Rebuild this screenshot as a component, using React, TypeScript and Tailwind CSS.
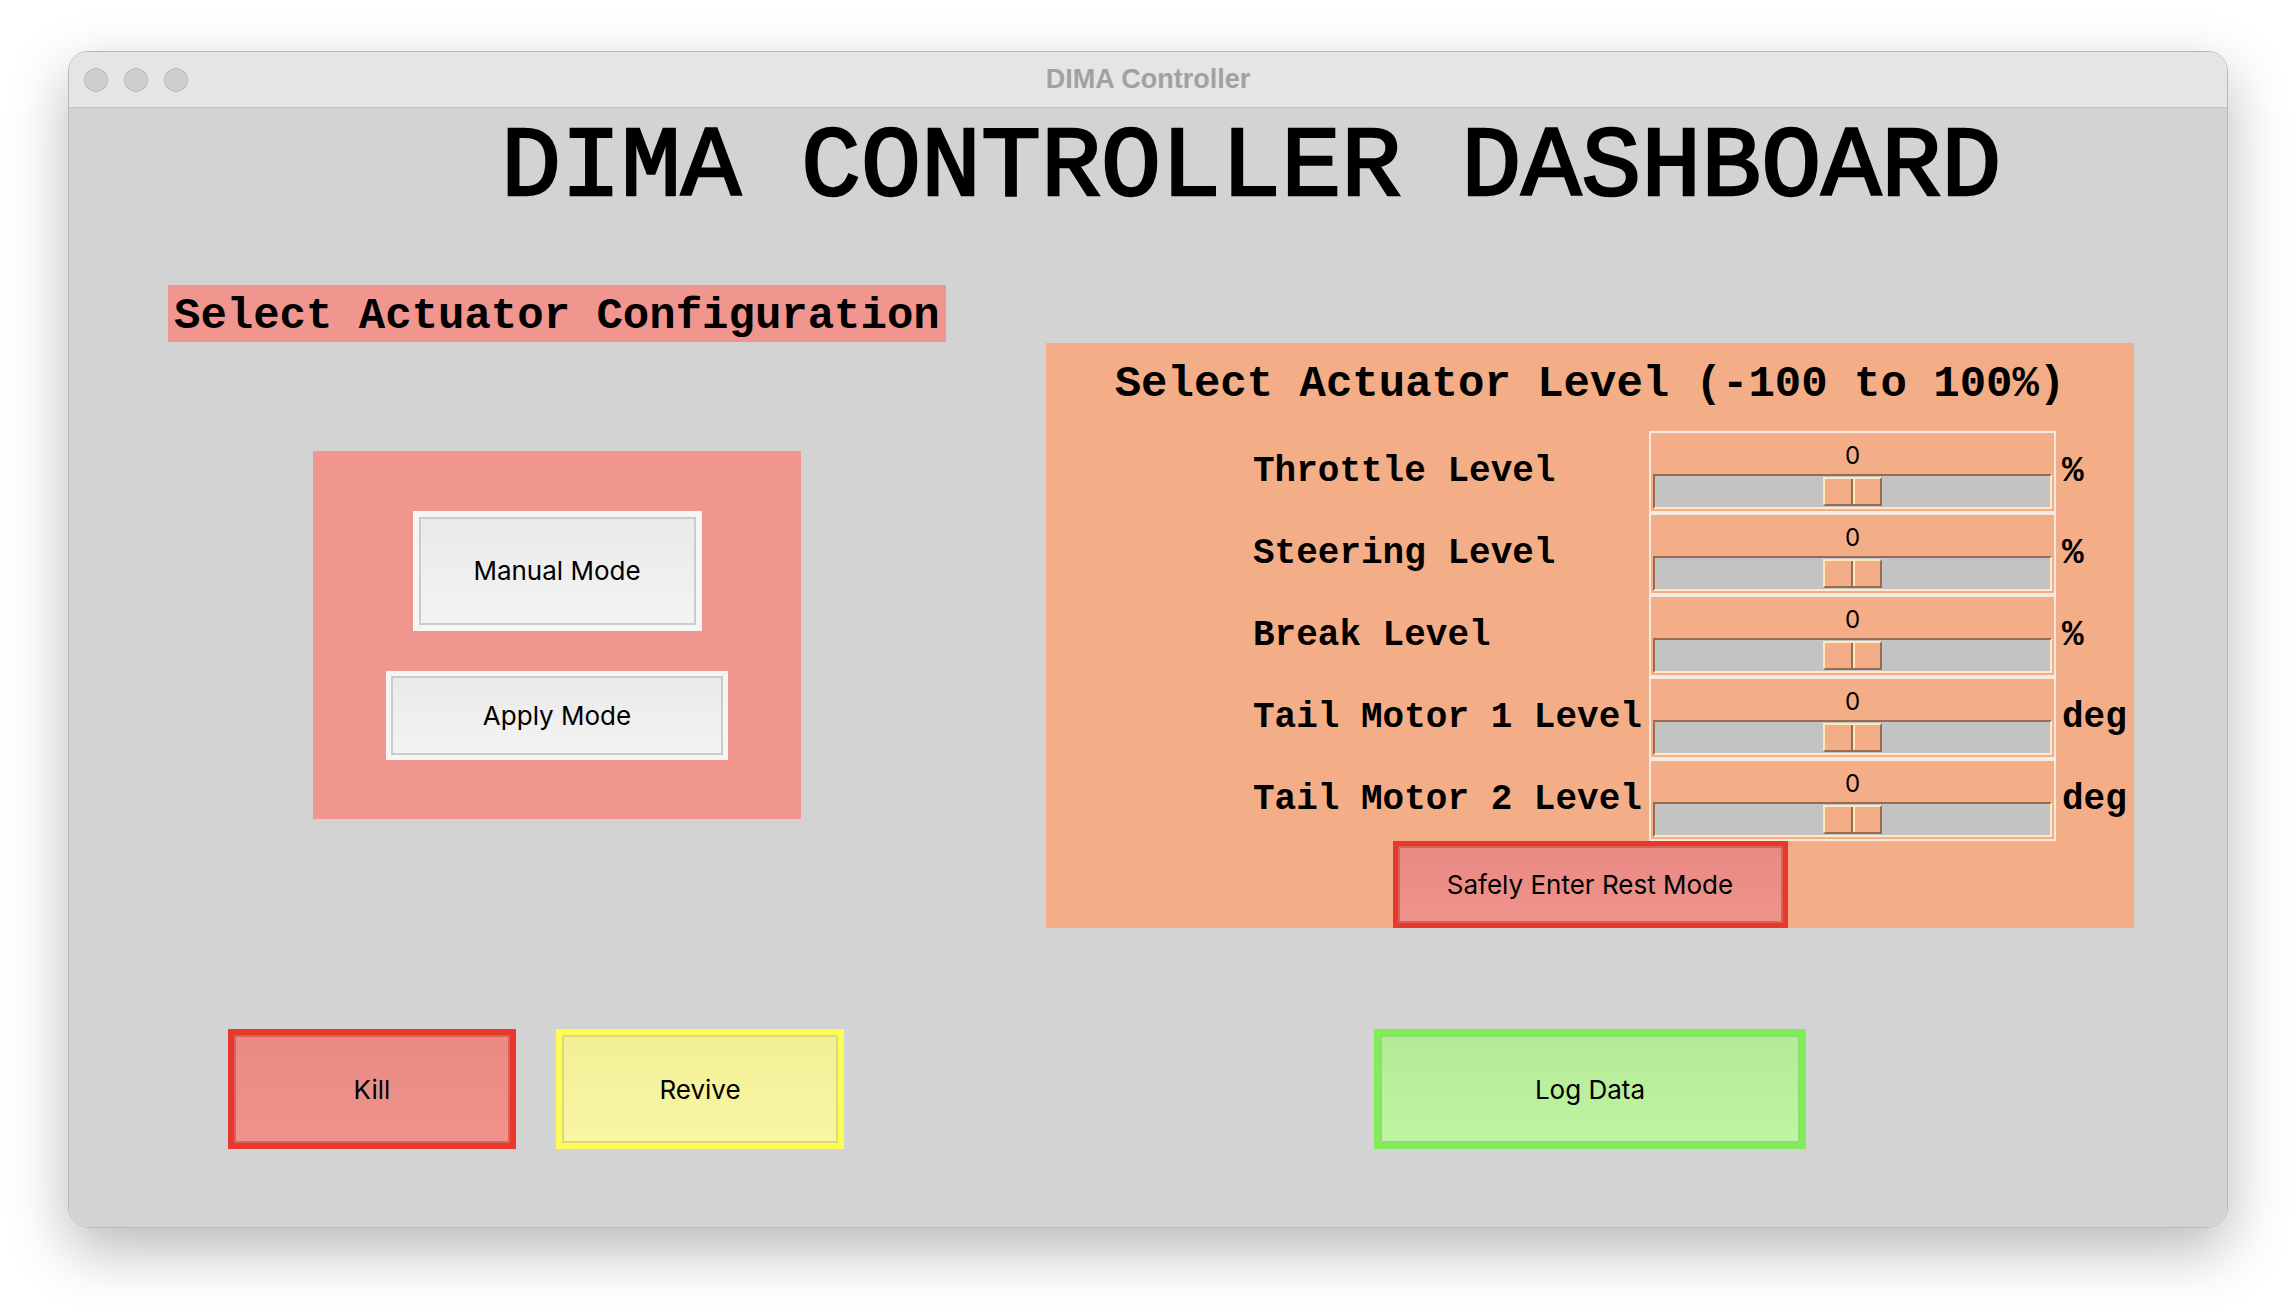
import React from "react";

const mono = "font-['Liberation_Mono','Courier_New',monospace]";
const sans = "font-['Inter','Roboto',sans-serif]";

const rows = [
  { label: "Throttle Level", unit: "%" },
  { label: "Steering Level", unit: "%" },
  { label: "Break Level", unit: "%" },
  { label: "Tail Motor 1 Level", unit: "deg" },
  { label: "Tail Motor 2 Level", unit: "deg" },
];

function LevelRow({ label, unit }: { label: string; unit: string }) {
  return (
    <div className="flex items-center h-[82px]">
      <div className={`${mono} w-[396px] text-[36px] font-bold leading-none text-black`}>{label}</div>
      <div className="w-[407px] h-[82px] border-2 border-[#f5e9e0] flex flex-col pb-[2px]">
        <div className={`${sans} h-[41px] flex items-center justify-center pt-[4px] text-[24px] leading-none text-black`}>
          0
        </div>
        <div className="mx-[2px] h-[35px] border-2 border-t-[#9b6b4f] border-l-[#9b6b4f] border-b-[#fdebc9] border-r-[#fdebc9] bg-[#c3c3c3] flex items-center justify-center">
          <div className="w-[59px] h-[29px] flex border-[2.5px] border-t-[#fde9c0] border-l-[#fde9c0] border-b-[#9b6b4f] border-r-[#9b6b4f] bg-[#f3ae88]">
            <div className="flex-1" />
            <div className="w-[2px] bg-[#9b6b4f]" />
            <div className="w-[2px] bg-[#fde9c0]" />
            <div className="flex-1" />
          </div>
        </div>
      </div>
      <div className={`${mono} pl-[6px] text-[36px] font-bold leading-none text-black`}>{unit}</div>
    </div>
  );
}

export default function App() {
  return (
    <div className="w-[2296px] h-[1312px] bg-white pt-[51px] pl-[68px]">
      <div className="w-[2160px] h-[1177px] rounded-[20px] overflow-hidden border border-[#b9b9b9] shadow-[0_22px_60px_rgba(0,0,0,0.28)] flex flex-col">
        {/* title bar */}
        <div className="h-[56px] shrink-0 bg-[#e5e5e5] border-b border-[#c3c3c3] grid grid-cols-[1fr_auto_1fr] items-center">
          <div className="flex items-center gap-[16px] pl-[15px]">
            <div className="w-[24px] h-[24px] rounded-full bg-[#cfcfcf] border border-[#b4b4b4]" />
            <div className="w-[24px] h-[24px] rounded-full bg-[#cfcfcf] border border-[#b4b4b4]" />
            <div className="w-[24px] h-[24px] rounded-full bg-[#cfcfcf] border border-[#b4b4b4]" />
          </div>
          <div className="font-['Liberation_Sans',Arial,sans-serif] text-[27px] font-bold text-[#a1a1a1] leading-none">
            DIMA Controller
          </div>
          <div />
        </div>

        {/* content */}
        <div className="flex-1 bg-[#d3d3d3] flex flex-col">
          <div className={`${mono} mt-[11px] pl-[432px] text-[100px] leading-[100px] text-black [-webkit-text-stroke:2.5px_#000]`}>
            DIMA CONTROLLER DASHBOARD
          </div>

          <div className="mt-[66px] flex items-start pl-[99px]">
            {/* left column */}
            <div className="w-[778px] flex flex-col items-center">
              <div className={`${mono} w-[778px] h-[57px] bg-[#f1968f] pt-[9px] px-[6px] text-[44px] font-bold leading-none text-black whitespace-nowrap`}>
                Select Actuator Configuration
              </div>
              <div className="mt-[109px] w-[488px] h-[368px] bg-[#f1968f] flex flex-col items-center justify-center gap-[40px]">
                <button className="w-[289px] h-[120px] border-[6px] border-[#f5f5f5] bg-[#f5f5f5]">
                  <div className={`${sans} w-full h-full border-2 border-[#cbcbcb] bg-linear-to-b from-[#eaeaea] to-[#f3f3f3] flex items-center justify-center text-[26px] text-black`}>
                    Manual Mode
                  </div>
                </button>
                <button className="w-[342px] h-[89px] border-[5px] border-[#f5f5f5] bg-[#f5f5f5]">
                  <div className={`${sans} w-full h-full border-2 border-[#cbcbcb] bg-linear-to-b from-[#eaeaea] to-[#f3f3f3] flex items-center justify-center text-[26px] text-black`}>
                    Apply Mode
                  </div>
                </button>
              </div>
            </div>

            {/* right panel */}
            <div className="ml-[100px] mt-[58px] w-[1088px] h-[585px] bg-[#f3ae88] flex flex-col">
              <div className={`${mono} pt-[19px] text-center text-[44px] font-bold leading-none text-black whitespace-nowrap`}>
                Select Actuator Level (-100 to 100%)
              </div>
              <div className="mt-[25px] pl-[207px] flex flex-col">
                {rows.map((r) => (
                  <LevelRow key={r.label} label={r.label} unit={r.unit} />
                ))}
              </div>
              <div className="flex justify-center">
                <button className="w-[395px] h-[87px] border-[5px] border-[#e8372b]">
                  <div className={`${sans} w-full h-full border-2 border-[#d7625b] bg-linear-to-b from-[#e98a84] to-[#ef938c] flex items-center justify-center text-[26px] text-black`}>
                    Safely Enter Rest Mode
                  </div>
                </button>
              </div>
            </div>
          </div>

          {/* bottom buttons */}
          <div className="mt-[101px] flex items-start pl-[159px]">
            <button className="w-[288px] h-[120px] border-[6px] border-[#e8372b]">
              <div className={`${sans} w-full h-full border-2 border-[#d7625b] bg-linear-to-b from-[#e98a84] to-[#ef938c] flex items-center justify-center text-[26px] text-black`}>
                Kill
              </div>
            </button>
            <button className="ml-[40px] w-[288px] h-[120px] border-[6px] border-[#fdfb55]">
              <div className={`${sans} w-full h-full border-2 border-[#dcd87c] bg-linear-to-b from-[#f2ef99] to-[#f8f6a0] flex items-center justify-center text-[26px] text-black`}>
                Revive
              </div>
            </button>
            <button className="ml-[530px] w-[432px] h-[120px] border-[6px] border-[#7fee57]">
              <div className={`${sans} w-full h-full border-2 border-[#8fdc74] bg-linear-to-b from-[#b5ea99] to-[#bff4a3] flex items-center justify-center text-[26px] text-black`}>
                Log Data
              </div>
            </button>
          </div>
        </div>
      </div>
    </div>
  );
}
